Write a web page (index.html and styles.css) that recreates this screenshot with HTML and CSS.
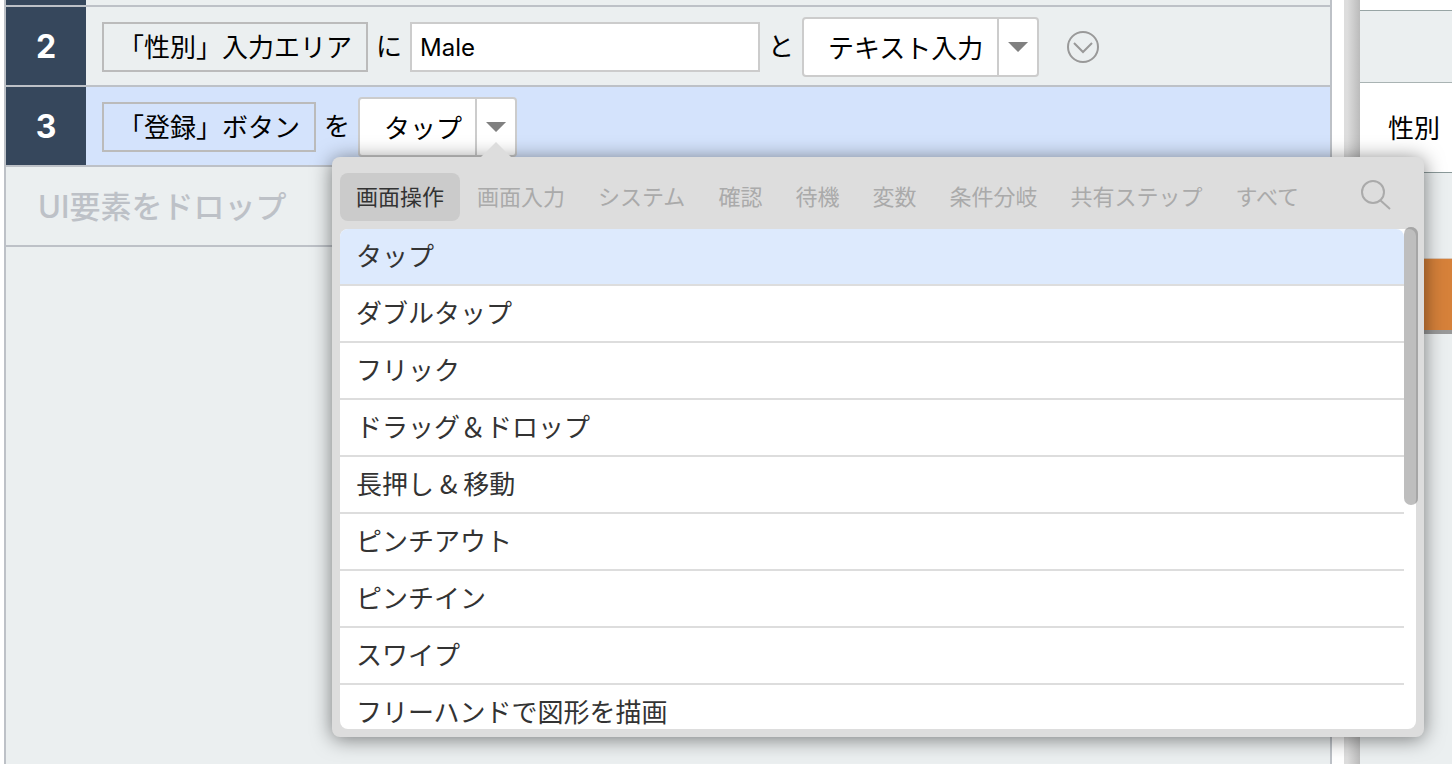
FILE: index.html
```
<!DOCTYPE html>
<html lang="ja">
<head>
    <meta charset="UTF-8">
    <meta name="viewport" content="width=device-width, initial-scale=1.0">
    <title>テストステップ</title>
    <link rel="stylesheet" href="styles.css">
</head>
<body>
    <div class="workspace">
        <main class="steps">
            <div class="step step-cut">
                <div class="step-number"></div>
            </div>

            <div class="step">
                <div class="step-number">2</div>
                <div class="step-body">
                    <span class="element">「性別」入力エリア</span>
                    <label for="value2">に</label>
                    <input type="text" class="value" id="value2" value="Male">
                    <label for="action2">と</label>
                    <div class="action">
                        <select id="action2">
                            <option selected>テキスト入力</option>
                        </select>
                        <button type="button" class="arrow" aria-label="操作を選択"></button>
                    </div>
                    <button type="button" class="more" aria-label="詳細">
                        <svg width="32" height="32" viewBox="0 0 32 32" fill="none" stroke="#999" stroke-width="2">
                            <circle cx="16" cy="16" r="15"/>
                            <path d="M7 12l9 9 9-9"/>
                        </svg>
                    </button>
                </div>
            </div>

            <div class="step step-active">
                <div class="step-number">3</div>
                <div class="step-body">
                    <span class="element">「登録」ボタン</span>
                    <label for="action3">を</label>
                    <div class="action">
                        <select id="action3">
                            <option selected>タップ</option>
                        </select>
                        <button type="button" class="arrow" aria-label="操作を選択" aria-expanded="true"></button>
                    </div>
                </div>
            </div>

            <div class="step drop">UI要素をドロップ</div>
        </main>

        <div class="divider"></div>

        <aside class="preview">
            <div class="preview-top"></div>
            <div class="preview-header"></div>
            <div class="preview-field">性別</div>
            <div class="preview-space"></div>
            <div class="preview-button"></div>
        </aside>

        <div class="popup">
            <div class="tabs">
                <button type="button" class="tab tab-active">画面操作</button>
                <button type="button" class="tab">画面入力</button>
                <button type="button" class="tab">システム</button>
                <button type="button" class="tab">確認</button>
                <button type="button" class="tab">待機</button>
                <button type="button" class="tab">変数</button>
                <button type="button" class="tab">条件分岐</button>
                <button type="button" class="tab">共有ステップ</button>
                <button type="button" class="tab">すべて</button>
                <button type="button" class="search" aria-label="検索">
                    <svg width="32" height="32" viewBox="0 0 32 32" fill="none" stroke="#aaa" stroke-width="2">
                        <circle cx="13" cy="13" r="11"/>
                        <path d="M20 21l10 9"/>
                    </svg>
                </button>
            </div>
            <ul class="list">
                <li class="selected">タップ</li>
                <li>ダブルタップ</li>
                <li>フリック</li>
                <li>ドラッグ＆ドロップ</li>
                <li>長押し &amp; 移動</li>
                <li>ピンチアウト</li>
                <li>ピンチイン</li>
                <li>スワイプ</li>
                <li>フリーハンドで図形を描画</li>
            </ul>
            <div class="scroll-thumb"></div>
        </div>
    </div>
</body>
</html>
```
FILE: styles.css
```
* {
    box-sizing: border-box;
}

body {
    margin: 0;
    background: white;
    color: black;
    font-family: "Noto Sans CJK JP", sans-serif;
    font-size: 26px;
    overflow: hidden;
}

button, input, select {
    margin: 0;
    padding: 0;
    border: none;
    background: none;
    color: inherit;
    font: inherit;
}

.workspace {
    position: relative;
    display: flex;
    height: 100vh;
    padding-left: 4px;
    overflow: hidden;
}

/* step list */
.steps {
    flex: 1;
    background: #ebeff0;
    border-left: 2px solid #bdc1c7;
    border-right: 2px solid #bdc1c7;
}

.step {
    display: flex;
    height: 80px;
    border-bottom: 2px solid #bdc1c7;
}

.step-cut {
    height: 7px;
}

.step-active {
    background: #d4e3fc;
}

.step-number {
    display: flex;
    align-items: center;
    justify-content: center;
    width: 80px;
    background: #36475c;
    color: white;
    font-family: Inter, sans-serif;
    font-size: 32px;
    font-weight: bold;
}

.step-body {
    display: flex;
    align-items: center;
    gap: 8px;
    padding: 2px 0 0 16px;
}

.element {
    height: 50px;
    padding: 0 14px;
    border: 2px solid #bbb;
    line-height: 44px;
    white-space: nowrap;
}

.step-body label {
    line-height: 44px;
    padding-bottom: 4px;
}

.value {
    width: 350px;
    height: 50px;
    padding: 0 8px;
    border: 2px solid #ccc;
    background: white;
    font-family: Inter, sans-serif;
    font-size: 24px;
}

.action {
    display: flex;
    height: 60px;
    border: 2px solid #ccc;
    border-radius: 4px;
    background: white;
}

.action select {
    appearance: none;
    padding: 0 12px 2px 24px;
}

.arrow {
    width: 40px;
    border-left: 2px solid #ccc;
}

.arrow::before {
    content: "";
    display: block;
    width: 20px;
    height: 10px;
    margin: 0 auto;
    background: #808080;
    clip-path: polygon(0 0, 100% 0, 50% 100%);
}

.more {
    height: 32px;
    margin-left: 20px;
}

.more svg, .search svg {
    display: block;
}

.drop {
    align-items: center;
    padding: 0 0 4px 32px;
    color: #bdc1c7;
    font-family: Inter, "Noto Sans CJK JP", sans-serif;
    font-size: 31px;
    font-weight: 500;
}

/* preview pane */
.divider {
    width: 16px;
    margin-left: 12px;
    background: linear-gradient(to right, #ddd 20%, #bbb);
}

.preview {
    width: 92px;
    background: #ebeff0;
}

.preview-top {
    height: 11px;
    background: white;
    border-bottom: 1px solid #98a5a5;
}

.preview-header {
    height: 72px;
    border-bottom: 1px solid #a9b3b3;
}

.preview-field {
    height: 90px;
    padding-left: 28px;
    background: white;
    border-bottom: 1px solid #8a9999;
    line-height: 88px;
}

.preview-space {
    height: 86px;
    border-bottom: 1px solid #d8c5b5;
}

.preview-button {
    height: 75px;
    background: #d6813a;
    border-bottom: 4px solid #999;
}

/* action menu */
.popup {
    position: absolute;
    top: 157px;
    left: 332px;
    right: 28px;
    padding: 16px 8px 8px;
    background: #ddd;
    border-radius: 8px;
    box-shadow: 0 2px 20px rgba(0, 0, 0, 0.5);
}

.popup::before {
    content: "";
    position: absolute;
    top: -15px;
    left: 149px;
    width: 30px;
    height: 15px;
    background: #ddd;
    clip-path: polygon(50% 0, 100% 100%, 0 100%);
}

.tabs {
    display: flex;
    gap: 1px;
    margin-bottom: 8px;
}

.tab {
    height: 48px;
    padding: 0 16px 4px;
    border-radius: 8px;
    color: #aaa;
    font-size: 22px;
    line-height: 44px;
    white-space: nowrap;
}

.tab-active {
    background: #cbcbcb;
    color: #333;
}

.search {
    height: 32px;
    margin: 6px 24px 0 auto;
}

.list {
    height: 500px;
    margin: 0;
    padding: 0 12px 0 0;
    background: white;
    border-radius: 8px;
    color: #333;
    list-style: none;
    overflow: hidden;
}

.list li {
    height: 57px;
    padding-left: 16px;
    border-bottom: 2px solid #ddd;
    line-height: 52px;
}

.list .selected {
    background: #ddeafd;
    border-top-right-radius: 8px;
}

.scroll-thumb {
    position: absolute;
    top: 70px;
    right: 6px;
    width: 14px;
    height: 278px;
    background: #bebebe;
    border-radius: 7px;
    box-shadow: inset -2px 2px 0 #a6a6a6;
}
```
